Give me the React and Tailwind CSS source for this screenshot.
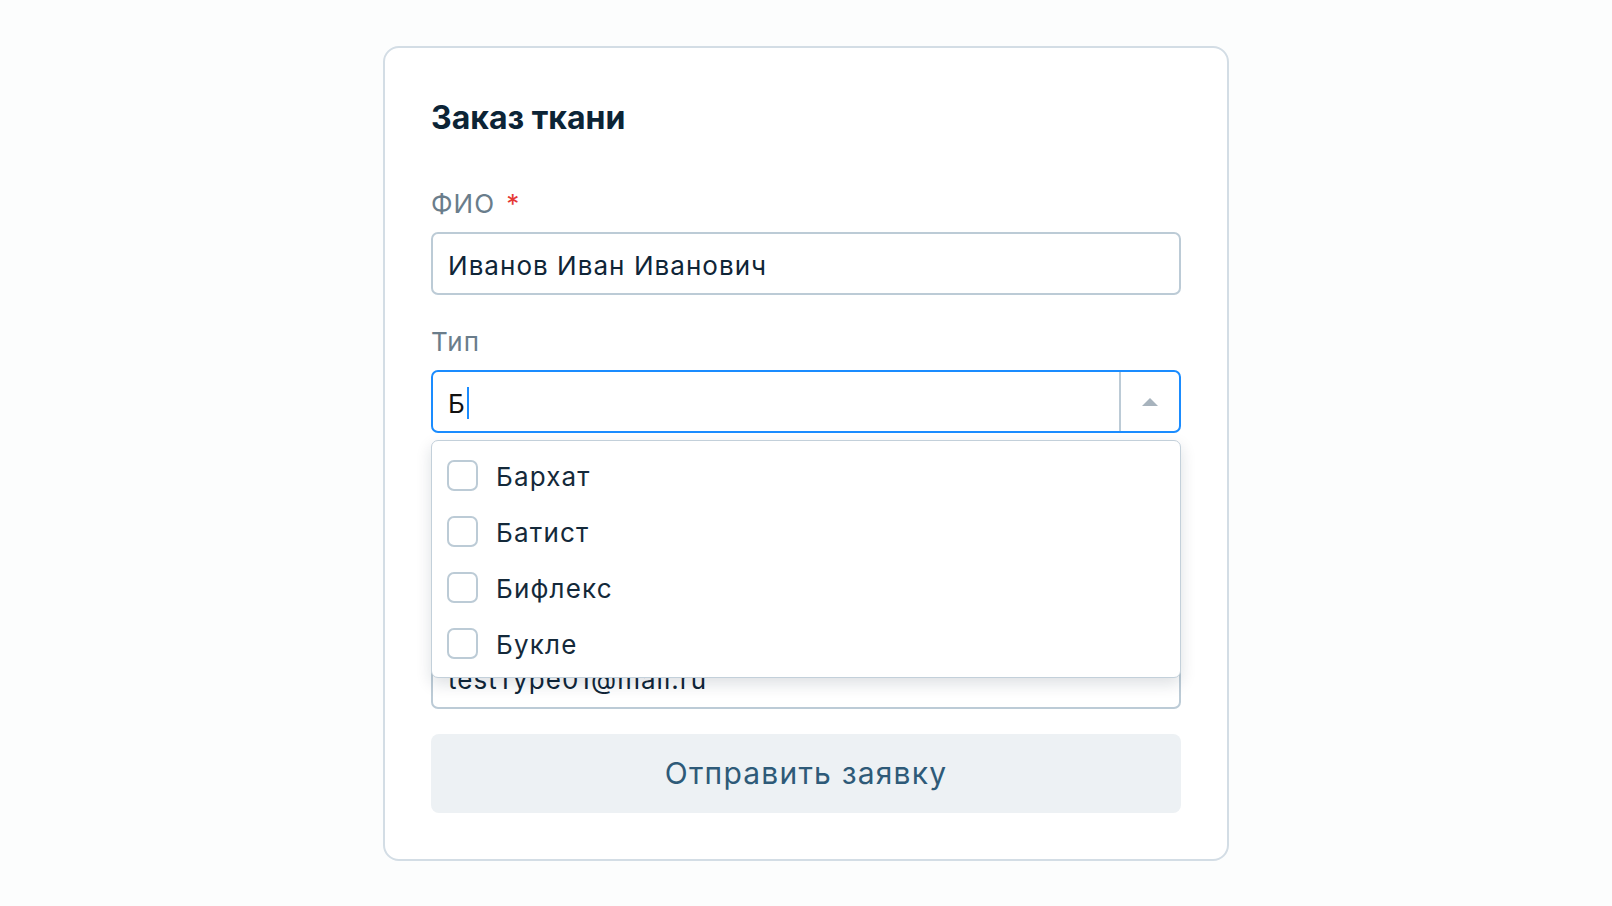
import React from 'react';

const options = ['Бархат', 'Батист', 'Бифлекс', 'Букле'];

function Field({ label, required, children, className = '' }) {
  return (
    <div className={'flex flex-col ' + className}>
      <label className="h-[32px] text-[26px] leading-[32px] tracking-[0.04em] text-[#6a7d8b]">
        {label}
        {required && <span className="ml-[11px] text-[#e53935]">*</span>}
      </label>
      <div className="mt-[12px]">{children}</div>
    </div>
  );
}

function TextInput({ value }) {
  return (
    <div className="flex h-[63px] items-center rounded-[7px] border-2 border-[#bccbd6] bg-white px-[15px] pt-[3px] text-[26px] tracking-[0.04em] text-[#0f2537]">
      {value}
    </div>
  );
}

export default function App() {
  return (
    <div
      className="min-h-screen bg-[#fcfdfd] flex justify-center pt-[46px]"
      style={{ fontFamily: 'Inter, "Noto Sans", sans-serif' }}
    >
      <div className="w-[846px] h-[815px] rounded-[16px] border-2 border-[#d3dde5] bg-white px-[46px] pt-[50px]">
        {/* Title */}
        <h1 className="h-[40px] text-[32px] leading-[40px] font-bold text-[#0c2436]">
          Заказ ткани
        </h1>

        <div className="relative mt-[50px] flex flex-col">
          <Field label="ФИО" required>
            <TextInput value="Иванов Иван Иванович" />
          </Field>

          <Field label="Тип" className="mt-[31px]">
            <div className="flex h-[63px] rounded-[7px] border-2 border-[#1a8cff] bg-white">
              <div className="flex flex-1 items-center pl-[15px] pt-[3px] text-[26px] text-[#111]">
                Б<span className="ml-[2px] inline-block h-[32px] w-[2px] bg-[#1a8cff]" />
              </div>
              <div className="flex w-[60px] items-center justify-center border-l-2 border-[#bccbd6]">
                <svg width="18" height="10" viewBox="0 0 18 10">
                  <path d="M9 1 L17 9 L1 9 Z" fill="#a7b3bd" />
                </svg>
              </div>
            </div>
          </Field>

          <Field label="Телефон" className="mt-[31px]">
            <TextInput value="+7 (999) 123-45-67" />
          </Field>

          <Field label="Email" className="mt-[31px]">
            <TextInput value="testType01@mail.ru" />
          </Field>

          {/* Dropdown list */}
          <div className="absolute left-0 right-0 top-[252px] rounded-[7px] border-[1.5px] border-[#c3d0da] bg-white py-[6px] shadow-[0_6px_16px_rgba(15,37,55,0.14)]">
            {options.map((opt) => (
              <div key={opt} className="flex h-[56px] items-center pl-[15px]">
                <span className="h-[31px] w-[31px] rounded-[7px] border-2 border-[#bccbd6] bg-white" />
                <span className="ml-[18px] pt-[3px] text-[26px] tracking-[0.045em] text-[#14293a]">{opt}</span>
              </div>
            ))}
          </div>

          <button className="mt-[25px] h-[79px] rounded-[8px] bg-[#edf1f4] text-[30px] tracking-[0.04em] text-[#2e5a78]">
            Отправить заявку
          </button>
        </div>
      </div>
    </div>
  );
}
